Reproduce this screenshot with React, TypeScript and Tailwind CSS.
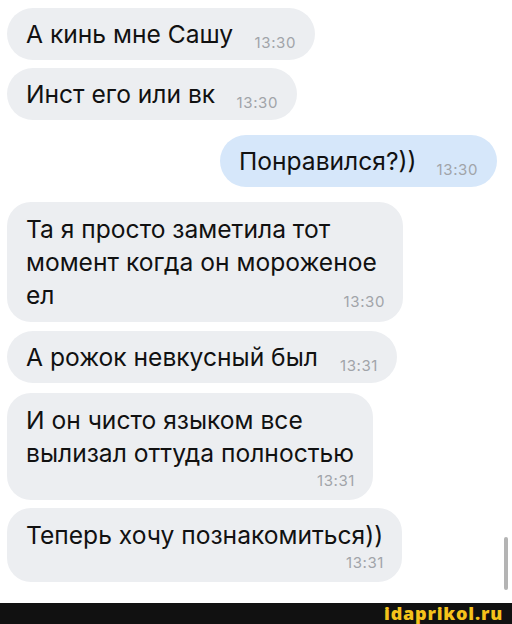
type Msg = {
  id: number
  out?: boolean
  lines: string[]
  time: string
  mode: 'inline' | 'last' | 'below'
  width: string
  gap: string
}

const messages: Msg[] = [
  { id: 1, lines: ['А кинь мне Сашу'], time: '13:30', mode: 'inline', width: 'w-[308px]', gap: 'mt-[8px]' },
  { id: 2, lines: ['Инст его или вк'], time: '13:30', mode: 'inline', width: 'w-[290px]', gap: 'mt-[8px]' },
  { id: 3, out: true, lines: ['Понравился?))'], time: '13:30', mode: 'inline', width: 'w-[277px]', gap: 'mt-[15px]' },
  {
    id: 4,
    lines: ['Та я просто заметила тот', 'момент когда он мороженое', 'ел'],
    time: '13:30',
    mode: 'last',
    width: 'w-[396px]',
    gap: 'mt-[15px]',
  },
  { id: 5, lines: ['А рожок невкусный был'], time: '13:31', mode: 'inline', width: 'w-[390px]', gap: 'mt-[9px]' },
  {
    id: 6,
    lines: ['И он чисто языком все', 'вылизал оттуда полностью'],
    time: '13:31',
    mode: 'below',
    width: 'w-[366px]',
    gap: 'mt-[10px]',
  },
  { id: 7, lines: ['Теперь хочу познакомиться))'], time: '13:31', mode: 'below', width: 'w-[395px]', gap: 'mt-[8px]' },
]

function Time({ value, className = '' }: { value: string; className?: string }) {
  return <span className={`text-[15px] leading-[20px] text-[#a1a4a9] tracking-[0.6px] ${className}`}>{value}</span>
}

function Bubble({ msg }: { msg: Msg }) {
  const bg = msg.out ? 'bg-[#d6e7fa]' : 'bg-[#eceef1]'
  const side = msg.out ? 'self-end' : 'self-start'

  if (msg.mode === 'inline') {
    return (
      <div className={`${side} ${msg.gap} ${msg.width} ${bg} rounded-[26px] pl-[19px] pr-[19px] pt-[10px] pb-[9px] flex items-baseline justify-between`}>
        <span className="whitespace-nowrap">{msg.lines[0]}</span>
        <Time value={msg.time} className="relative top-[5px]" />
      </div>
    )
  }

  return (
    <div className={`${side} ${msg.gap} ${msg.width} ${bg} rounded-[24px] pl-[19px] pr-[18px] pt-[11px] ${msg.mode === 'last' ? 'pb-[10px]' : 'pb-[9px]'}`}>
      {msg.lines.map((line, i) => {
        const isLast = i === msg.lines.length - 1
        if (isLast && msg.mode === 'last') {
          return (
            <div key={i} className="flex items-baseline justify-between">
              <span className="whitespace-nowrap">{line}</span>
              <Time value={msg.time} className="relative top-[3px]" />
            </div>
          )
        }
        return (
          <div key={i} className="whitespace-nowrap">
            {line}
          </div>
        )
      })}
      {msg.mode === 'below' && (
        <div className="flex justify-end mt-[1px]">
          <Time value={msg.time} />
        </div>
      )}
    </div>
  )
}

export default function App() {
  return (
    <div className="relative w-[512px] h-[624px] bg-white flex flex-col overflow-hidden font-['Inter','Liberation_Sans',sans-serif]">
      {/* Chat */}
      <div className="flex-1 flex flex-col pl-[7px] pr-[15px] text-[24.6px] leading-[33px] text-[#111]">
        {messages.map((m) => (
          <Bubble key={m.id} msg={m} />
        ))}
      </div>

      {/* Scroll indicator */}
      <div className="absolute right-[4px] top-[537px] w-[4px] h-[53px] rounded-full bg-[#b4b4b4]" />

      {/* Watermark bar */}
      <div className="h-[21px] bg-[#111] flex items-center justify-end pr-[9px]">
        <span className="text-[18px] leading-[21px] font-extrabold text-[#f5c21b] font-['Open_Sans','Liberation_Sans',sans-serif] tracking-[0.8px]">
          idaprikol.ru
        </span>
      </div>
    </div>
  )
}
